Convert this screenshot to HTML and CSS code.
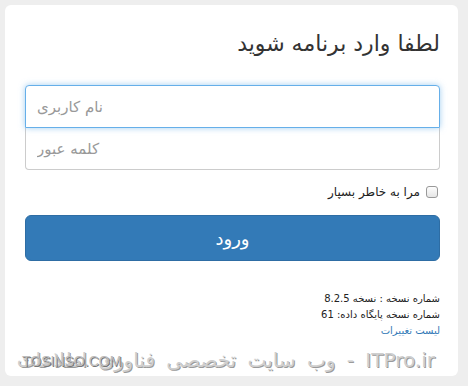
FILE: index.html
```html
<!DOCTYPE html>
<html lang="fa" dir="rtl">
<head>
<meta charset="utf-8">
<link rel="stylesheet" href="styles.css">
</head>
<body>
<div class="card">
  <h1 class="title">لطفا وارد برنامه شوید</h1>
  <div class="fields">
    <input class="field focused" type="text" placeholder="نام کاربری">
    <input class="field" type="password" placeholder="کلمه عبور">
  </div>
  <label class="remember"><span class="box"></span><span>مرا به خاطر بسپار</span></label>
  <button class="btn">ورود</button>
  <div class="info">
    <div>شماره نسخه : نسخه 8.2.5</div>
    <div>شماره نسخه پایگاه داده: 61</div>
    <a class="link" href="#">لیست تغییرات</a>
  </div>
  <div class="watermark"><span class="wm-main">ITPro.ir - وب سایت تخصصی فناوری اطلاعات</span><span class="wm-site" dir="ltr">TOSINSO.COM</span></div>
</div>
</body>
</html>
```

FILE: styles.css
```css
* { box-sizing: border-box; }
html, body { margin: 0; padding: 0; }
body {
  background: #eeeeee;
  font-family: "DejaVu Sans", sans-serif;
  color: #333;
  width: 468px;
  height: 386px;
  overflow: hidden;
}
.card {
  position: relative;
  margin: 5px 10px 0 5px;
  height: 371px;
  background: #fff;
  border-radius: 6px;
  padding: 22px 18px 0 20px;
  overflow: hidden;
}
.title {
  margin: 0;
  font-weight: normal;
  font-size: 22px;
  line-height: 34px;
  color: #333;
}
.fields {
  margin-top: 24px;
  display: flex;
  flex-direction: column;
}
.field {
  display: block;
  width: 100%;
  height: 43px;
  border: 1px solid #ccc;
  background: #fff;
  font-family: "DejaVu Sans", sans-serif;
  font-size: 15px;
  padding: 0 11px;
  outline: none;
  direction: rtl;
  text-align: left;
}
.field::placeholder { color: #999; }
.field.focused {
  border-color: #66afe9;
  border-radius: 4px 4px 0 0;
  box-shadow: 0 0 6px rgba(102, 175, 233, 0.6);
  position: relative;
  z-index: 1;
}
.field:not(.focused) {
  border-top: 0;
  border-radius: 0 0 4px 4px;
  height: 42px;
}
.remember {
  display: flex;
  align-items: center;
  gap: 6px;
  margin-top: 14px;
  height: 16px;
  font-size: 12px;
  color: #222;
}
.box {
  width: 12px;
  height: 12px;
  border: 1px solid #999;
  border-radius: 3px;
  background: linear-gradient(#fdfdfd, #e6e6e6);
  margin-right: 2px;
}
.btn {
  display: block;
  width: 100%;
  height: 46px;
  margin-top: 15px;
  background: #337ab7;
  border: 1px solid #2e6da4;
  border-radius: 6px;
  color: #fff;
  font-family: "DejaVu Sans", sans-serif;
  font-size: 18px;
}
.info {
  margin-top: 30px;
  font-size: 10px;
  line-height: 16px;
  color: #222;
  display: flex;
  flex-direction: column;
  align-items: flex-start;
}
.link {
  color: #337ab7;
  text-decoration: none;
}
.watermark {
  position: absolute;
  left: 14px;
  right: 23px;
  bottom: 4px;
  height: 24px;
}
.wm-main {
  position: absolute;
  right: 0;
  top: 0;
  font-size: 20px;
  line-height: 24px;
  word-spacing: 5px;
  color: #cfcfcf;
  text-shadow: 1px 1px 0 #9a9a9a;
  white-space: nowrap;
}
.wm-site {
  position: absolute;
  left: 3px;
  top: 5px;
  font-family: "Liberation Sans", sans-serif;
  font-size: 14px;
  line-height: 16px;
  color: #bdbdbd;
  text-shadow: 1px 1px 0 #777;
}
```
